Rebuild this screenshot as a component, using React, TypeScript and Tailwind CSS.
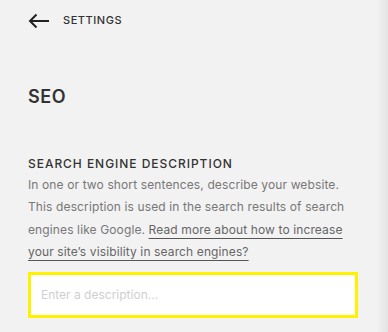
export default function App() {
  return (
    <div
      className="relative w-[388px] h-[332px] overflow-hidden bg-[#f2f2f2]"
      style={{ fontFamily: "Inter, 'Open Sans', sans-serif" }}
    >
      <div className="pl-[28px] pr-[30px]">
        <div className="flex items-center h-[41px] gap-[14px]">
          <svg width="21" height="16" viewBox="0 0 21 16" fill="none" className="mt-[1px]">
            <path d="M21 8H2.5M8.5 1.5L2 8l6.5 6.5" stroke="#222" strokeWidth="2" />
          </svg>
          <span className="text-[11px] font-medium tracking-[0.05em] text-[#333]">SETTINGS</span>
        </div>
        <div className="mt-[44px] text-[18px] font-semibold tracking-[0.03em] text-[#333] leading-[24px]">SEO</div>
        <div className="mt-[47px] text-[12px] font-medium tracking-[0.08em] text-[#333] leading-[16px]">
          SEARCH ENGINE DESCRIPTION
        </div>
        <p className="mt-[2px] text-[12px] leading-[22.4px] text-[#777] tracking-[0.01em]">
          In one or two short sentences, describe your website. This description is used in the search results of search engines like Google.{" "}
          <a className="text-[#666] underline decoration-[#555] underline-offset-[4px]">Read more about how to increase your site’s visibility in search engines?</a>
        </p>
        <div className="mt-[8px] h-[46px] w-[330px] border-[3px] border-[#fff200] bg-white flex items-center pl-[10px]">
          <span className="text-[12px] text-[#cfcfcf]">Enter a description...</span>
        </div>
      </div>
      <div className="absolute top-0 right-0 h-full w-[12px] bg-gradient-to-r from-[#f2f2f2]/0 to-[#e4e4e4]" />
    </div>
  );
}
